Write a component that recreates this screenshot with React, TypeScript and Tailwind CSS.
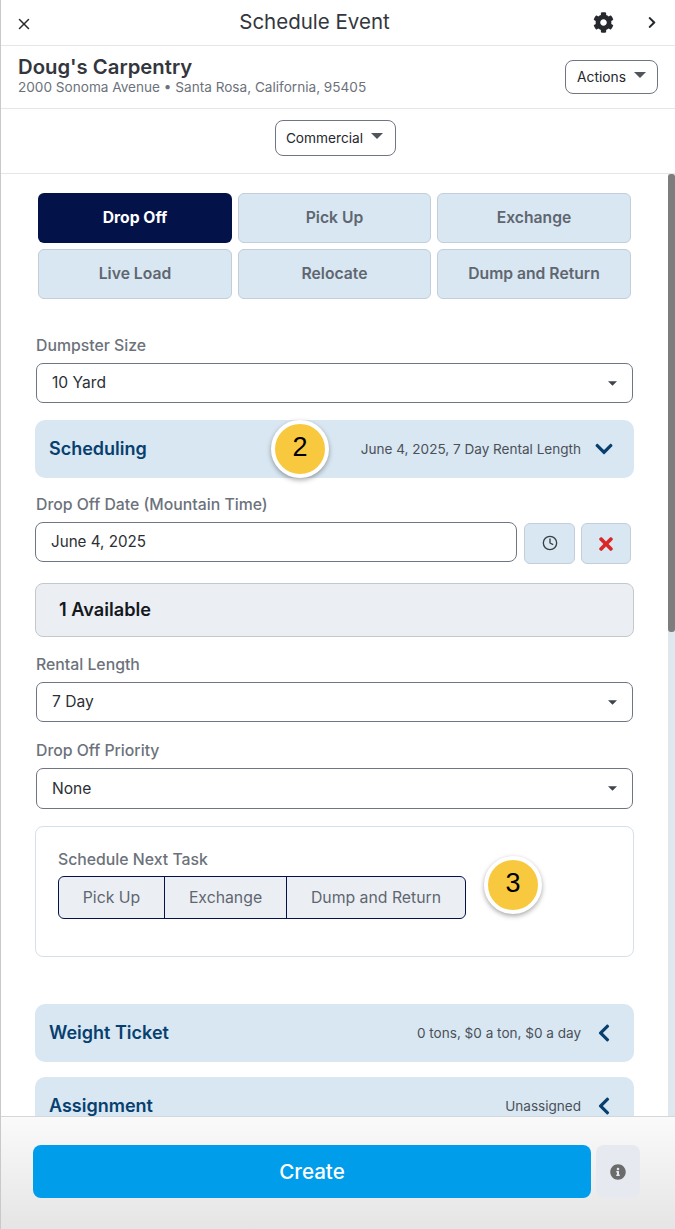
import React from "react";
import { FaCog, FaTimes, FaInfoCircle, FaChevronDown, FaChevronLeft, FaChevronRight } from "react-icons/fa";
import { X, Clock } from "lucide-react";

function Caret({ className }: { className: string }) {
  return (
    <svg viewBox="0 0 10 5" className={className} fill="currentColor">
      <path d="M0 0h10L5 5z" />
    </svg>
  );
}

function Tab({ label, active }: { label: string; active?: boolean }) {
  return (
    <div
      className={
        active
          ? "h-[50px] rounded-[6px] bg-[#03134a] text-white font-bold text-[15.7px] flex items-center justify-center"
          : "h-[50px] rounded-[6px] bg-[#d8e7f2] border border-[#c3ced9] text-[#5f6670] font-semibold text-[15.7px] flex items-center justify-center"
      }
    >
      {label}
    </div>
  );
}

function Field({ label, value, mt, h }: { label: string; value: string; mt: string; h: string }) {
  return (
    <div className={mt}>
      <div className="ml-px text-[15.8px] leading-[18px] font-medium text-[#6c727b] mb-[8px]">{label}</div>
      <div className={`${h} ml-px w-[597px] rounded-[7px] border border-[#6f7682] bg-white pl-[15px] pr-[15px] flex items-center justify-between text-[15.6px] text-[#2b2f36]`}>
        <span>{value}</span>
        <Caret className="w-[9px] h-[5px] text-[#3f444c]" />
      </div>
    </div>
  );
}

function Section({ title, sub, icon, mt }: { title: string; sub: string; icon: React.ReactNode; mt: string }) {
  return (
    <div className={`h-[58px] w-[599px] ${mt} rounded-[10px] bg-[#d8e7f2] pl-[14px] pr-[21px] flex items-center justify-between`}>
      <span className="text-[18px] font-semibold text-[#07406f] -mt-[1px]">{title}</span>
      <div className="flex items-center">
        <span className="text-[13.55px] text-[#4b5058] mr-[14px]">{sub}</span>
        <span className="w-[18px] flex justify-center text-[#07406f]">{icon}</span>
      </div>
    </div>
  );
}

function Badge({ n, className }: { n: string; className: string }) {
  return (
    <div
      className={`absolute w-[58px] h-[58px] rounded-full bg-[#f8c93f] border-[4px] border-white shadow-[0_2px_5px_rgba(0,0,0,0.35)] flex items-center justify-center text-[27px] text-black font-['Liberation_Sans',sans-serif] ${className}`}
    >
      <span className="-mt-[3px]">{n}</span>
    </div>
  );
}

function Seg({ label, w, last }: { label: string; w: string; last?: boolean }) {
  return (
    <div className={`${w} ${last ? "" : "border-r border-[#03134a]"} flex items-center justify-center text-[15.8px] text-[#5f6670]`}>
      {label}
    </div>
  );
}

export default function App() {
  return (
    <div className="w-[675px] h-[1229px] overflow-hidden flex flex-col bg-white border-l border-[#c9c9c9] font-['Inter',sans-serif]">
      <header className="h-[46px] shrink-0 border-b border-[#e6e6e6] flex items-center pl-[14px] pr-[17px] relative">
        <X className="w-[18px] h-[18px] text-[#25282d] mt-[2px]" strokeWidth={2} />
        <div className="flex-1 text-center text-[20.5px] text-[#33373d] pl-[3px] -mt-[1px]">Schedule Event</div>
        <FaCog className="w-[21px] h-[21px] text-[#25282d] mr-[32px] -mt-[1px]" />
        <FaChevronRight className="w-[12px] h-[13px] text-[#25282d]" />
      </header>

      <div className="h-[63px] shrink-0 border-b border-[#e6e6e6] flex items-center justify-between pl-[17px] pr-[17px]">
        <div className="-mt-[3px]">
          <div className="text-[20.3px] leading-[24px] font-semibold text-[#33373d] -mb-[1px] -translate-y-px">Doug's Carpentry</div>
          <div className="text-[13.6px] leading-[17px] text-[#6c727b]">2000 Sonoma Avenue • Santa Rosa, California, 95405</div>
        </div>
        <div className="w-[93px] h-[34px] rounded-[8px] border border-[#6f7682] flex items-center justify-center gap-[8px] text-[13.8px] text-[#25282d] -mt-[1px]">
          <span className="pt-[2px]">Actions</span>
          <Caret className="w-[12px] h-[6px] text-[#50555d] -mt-[3px]" />
        </div>
      </div>

      <div className="h-[65px] shrink-0 border-b border-[#e6e6e6] flex items-center justify-center pr-[5px]">
        <div className="w-[121px] h-[36px] rounded-[8px] border border-[#6f7682] flex items-center justify-center gap-[8px] pr-[2px] text-[13.7px] text-[#25282d] -mt-[7px]">
          <span className="pt-[2px]">Commercial</span>
          <Caret className="w-[12px] h-[6px] text-[#50555d] -mt-[3px]" />
        </div>
      </div>

      <div className="flex-1 min-h-0 flex relative">
        <main className="w-[667px] overflow-hidden pl-[34px] pr-[33px] pt-[19px] relative">
          <div className="ml-[3px] w-[593px] grid grid-cols-[194px_193px_194px] gap-x-[6px] gap-y-[6px]">
            <Tab label="Drop Off" active />
            <Tab label="Pick Up" />
            <Tab label="Exchange" />
            <Tab label="Live Load" />
            <Tab label="Relocate" />
            <Tab label="Dump and Return" />
          </div>

          <Field label="Dumpster Size" value="10 Yard" mt="mt-[38px]" h="h-[40px]" />

          <Section title="Scheduling" sub="June 4, 2025, 7 Day Rental Length" icon={<FaChevronDown className="w-[18px] h-[20px]" />} mt="mt-[17px]" />

          <div className="ml-px mt-[18px] text-[15.8px] leading-[18px] font-medium text-[#6c727b]">Drop Off Date (Mountain Time)</div>
          <div className="mt-[8px] flex items-start">
            <div className="w-[482px] h-[40px] rounded-[8px] border border-[#6f7682] bg-white pl-[15px] flex items-center text-[15.2px] text-[#2b2f36]">June 4, 2025</div>
            <div className="ml-[7px] w-[51px] h-[41px] mt-[1px] rounded-[6px] bg-[#d8e7f2] border border-[#c3ced9] flex items-center justify-center">
              <Clock className="w-[16px] h-[16px] text-[#3a3e45] -mt-[1px]" strokeWidth={2} />
            </div>
            <div className="ml-[6px] w-[50px] h-[41px] mt-[1px] rounded-[6px] bg-[#d8e7f2] border border-[#c3ced9] flex items-center justify-center">
              <FaTimes className="w-[14px] h-[20px] text-[#dc2626]" />
            </div>
          </div>

          <div className="mt-[19px] w-[599px] h-[54px] rounded-[8px] bg-[#ebeff4] border border-[#c3c8cf] pl-[23px] flex items-center text-[18.2px] font-semibold text-[#15181c]">1 Available</div>

          <Field label="Rental Length" value="7 Day" mt="mt-[19px]" h="h-[40px]" />
          <Field label="Drop Off Priority" value="None" mt="mt-[20px]" h="h-[41px]" />

          <div className="mt-[17px] w-[599px] h-[131px] rounded-[8px] border border-[#d6e0ea] pl-[22px] pt-[24px]">
            <div className="text-[15.8px] leading-[18px] font-medium text-[#6c727b]">Schedule Next Task</div>
            <div className="mt-[7px] w-[408px] h-[43px] rounded-[6px] border border-[#03134a] bg-[#ebeff4] flex overflow-hidden">
              <Seg label="Pick Up" w="w-[106px]" />
              <Seg label="Exchange" w="w-[122px]" />
              <Seg label="Dump and Return" w="flex-1" last />
            </div>
          </div>

          <Section title="Weight Ticket" sub="0 tons, $0 a ton, $0 a day" icon={<FaChevronLeft className="w-[14px] h-[20px]" />} mt="mt-[47px]" />
          <Section title="Assignment" sub="Unassigned" icon={<FaChevronLeft className="w-[14px] h-[20px]" />} mt="mt-[15px]" />

          <Badge n="2" className="left-[270px] top-[246px]" />
          <Badge n="3" className="left-[483px] top-[682px]" />
        </main>
        <div className="w-[7px] bg-[#dfe7ef]">
          <div className="h-[458px] rounded-[3px] bg-[#7d7d7d]" />
        </div>
      </div>

      <footer className="h-[113px] shrink-0 border-t border-[#d4d7da] bg-gradient-to-b from-[#fafafa] to-[#e5e5e5] pl-[32px] pt-[28px] flex items-start">
        <div className="w-[558px] h-[53px] rounded-[8px] bg-[#009deb] text-white text-[20.6px] font-medium flex items-center justify-center pt-[2px]">Create</div>
        <div className="ml-[5px] w-[44px] h-[53px] rounded-[8px] bg-[#e6e9ef] flex items-center justify-center">
          <FaInfoCircle className="w-[16px] h-[16px] text-[#6b6b6b]" />
        </div>
      </footer>
    </div>
  );
}
